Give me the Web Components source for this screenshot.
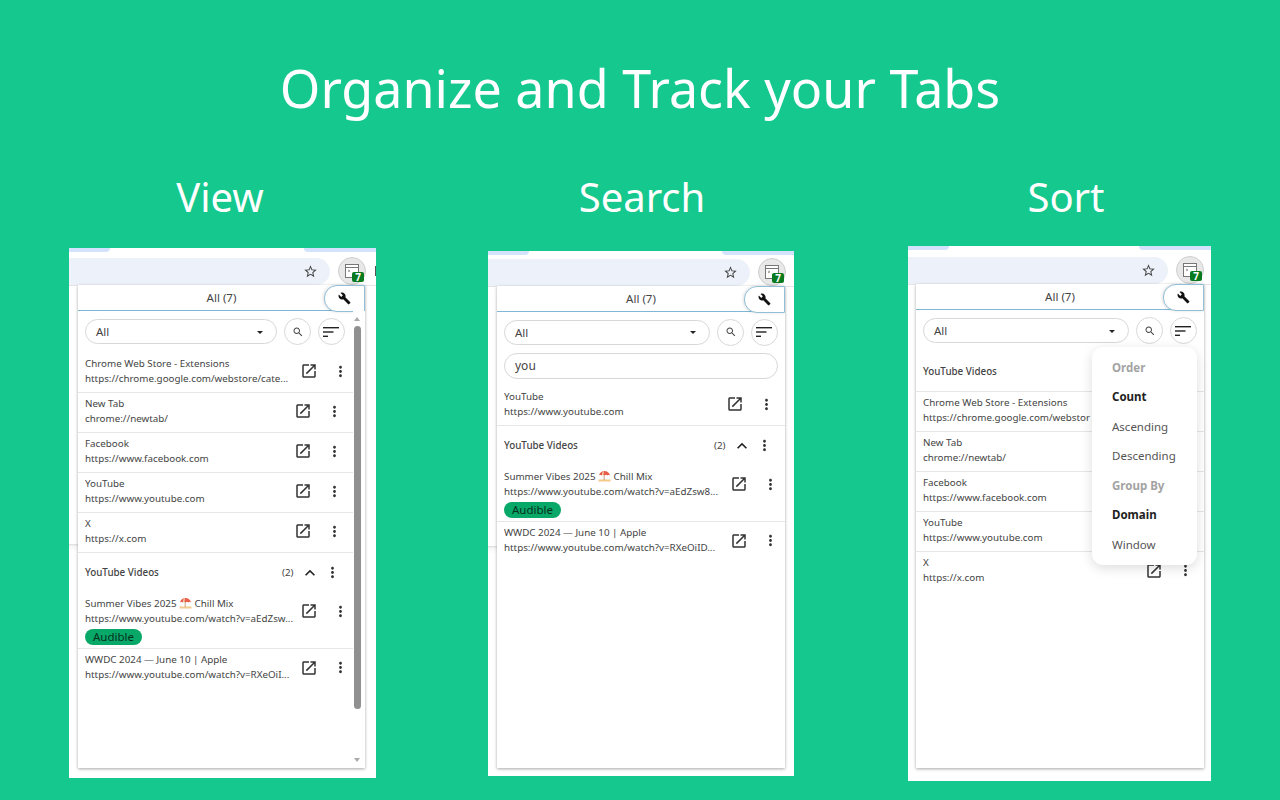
<!DOCTYPE html>
<html lang="en"><head><meta charset="utf-8"><title>Organize and Track your Tabs</title>
<style>
html,body{margin:0;padding:0;background:#15c88d}
body{font-family:"Noto Sans","Open Sans",sans-serif;color:#444}
</style></head><body>

<promo-page>
  <span slot="title">Organize and Track your Tabs</span>

  <promo-column heading="View" style="--hl:0px;--hr:5px;--gap:30px;--w:307px;--h:530px">
    <browser-shot style="--strip:9px;--addr:261px;--pl:9px;--pw:287px;--ph:483px;--line:296px">
      <tabs-popup scroll>
        <tab-row style="--end:4.5px"><span>Chrome Web Store - Extensions</span><span slot="url">https://chrome.google.com/webstore/cate...</span></tab-row>
        <tab-row><span>New Tab</span><span slot="url">chrome://newtab/</span></tab-row>
        <tab-row><span>Facebook</span><span slot="url">https://www.facebook.com</span></tab-row>
        <tab-row><span>YouTube</span><span slot="url">https://www.youtube.com</span></tab-row>
        <tab-row><span>X</span><span slot="url">https://x.com</span></tab-row>
        <tab-group open>YouTube Videos</tab-group>
        <tab-row audible style="--end:4.5px"><span>Summer Vibes 2025 <beach-emoji></beach-emoji> Chill Mix</span><span slot="url">https://www.youtube.com/watch?v=aEdZsw...</span></tab-row>
        <tab-row plain style="--end:4.5px"><span>WWDC 2024 — June 10 | Apple</span><span slot="url">https://www.youtube.com/watch?v=RXeOiI...</span></tab-row>
      </tabs-popup>
    </browser-shot>
  </promo-column>

  <promo-column heading="Search" style="--hl:2px;--hr:0px;--gap:33px;--w:306px;--h:525px;--ml:112px">
    <browser-shot style="--strip:7px;--addr:262px;--pl:9px;--pw:288px;--ph:482px;--line:295px">
      <tabs-popup query="you">
        <tab-row><span>YouTube</span><span slot="url">https://www.youtube.com</span></tab-row>
        <tab-group open>YouTube Videos</tab-group>
        <tab-row audible style="--end:6.5px"><span>Summer Vibes 2025 <beach-emoji></beach-emoji> Chill Mix</span><span slot="url">https://www.youtube.com/watch?v=aEdZsw8...</span></tab-row>
        <tab-row plain style="--end:6.5px"><span>WWDC 2024 — June 10 | Apple</span><span slot="url">https://www.youtube.com/watch?v=RXeOiID...</span></tab-row>
      </tabs-popup>
    </browser-shot>
  </promo-column>

  <promo-column heading="Sort" style="--hl:13px;--hr:0px;--gap:28px;--w:303px;--h:535px;--ml:114px">
    <browser-shot style="--strip:10px;--addr:260px;--pl:8px;--pw:288px;--ph:484px;--line:-9px">
      <tabs-popup>
        <tab-group first>YouTube Videos</tab-group>
        <tab-row><span>Chrome Web Store - Extensions</span><span slot="url">https://chrome.google.com/webstor</span></tab-row>
        <tab-row><span>New Tab</span><span slot="url">chrome://newtab/</span></tab-row>
        <tab-row><span>Facebook</span><span slot="url">https://www.facebook.com</span></tab-row>
        <tab-row><span>YouTube</span><span slot="url">https://www.youtube.com</span></tab-row>
        <tab-row plain><span>X</span><span slot="url">https://x.com</span></tab-row>
        <sort-menu slot="overlay">
          <b class="h">Order</b><b>Count</b><span>Ascending</span><span>Descending</span>
          <b class="h">Group By</b><b>Domain</b><span>Window</span>
        </sort-menu>
      </tabs-popup>
    </browser-shot>
  </promo-column>
</promo-page>

<script>
const ICONS={
 open:'M19 19H5V5h7V3H5c-1.11 0-2 .9-2 2v14c0 1.1.89 2 2 2h14c1.1 0 2-.9 2-2v-7h-2v7zM14 3v2h3.59l-9.83 9.83 1.41 1.41L19 6.41V10h2V3h-7z',
 dots:'M12 8c1.1 0 2-.9 2-2s-.9-2-2-2-2 .9-2 2 .9 2 2 2zm0 2c-1.1 0-2 .9-2 2s.9 2 2 2 2-.9 2-2-.9-2-2-2zm0 6c-1.1 0-2 .9-2 2s.9 2 2 2 2-.9 2-2-.9-2-2-2z',
 up:'M12 8l-6 6 1.41 1.41L12 10.83l4.59 4.58L18 14z',
 wrench:'M22.7 19l-9.1-9.1c.9-2.3.4-5-1.5-6.9-2-2-5-2.4-7.4-1.3L9 6 6 9 1.6 4.7C.4 7.1.9 10.1 2.9 12.1c1.9 1.9 4.6 2.4 6.9 1.5l9.1 9.1c.4.4 1 .4 1.4 0l2.3-2.3c.5-.4.5-1.1.1-1.4z',
 search:'M15.5 14h-.79l-.28-.27C15.41 12.59 16 11.11 16 9.5 16 5.91 13.09 3 9.5 3S3 5.91 3 9.5 5.91 16 9.5 16c1.61 0 3.09-.59 4.23-1.57l.27.28v.79l5 4.99L20.49 19l-4.99-5zm-6 0C7.01 14 5 11.99 5 9.5S7.01 5 9.5 5 14 7.01 14 9.5 11.99 14 9.5 14z',
 star:'M22 9.24l-7.19-.62L12 2 9.19 8.63 2 9.24l5.46 4.73L5.82 21 12 17.27 18.18 21l-1.63-7.03L22 9.24zM12 15.4l-3.76 2.27 1-4.28-3.32-2.88 4.38-.38L12 6.1l1.71 4.04 4.38.38-3.32 2.88 1 4.28L12 15.4z'
};
const icon=(n,s,c='#333')=>`<svg width="${s}" height="${s}" viewBox="0 0 24 24" fill="${c}" aria-hidden="true"><path d="${ICONS[n]}"/></svg>`;

class Base extends HTMLElement{
  constructor(){super();this.attachShadow({mode:'open'}).innerHTML=this.markup();}
  markup(){return '<slot></slot>';}
}
customElements.define('promo-page',class extends Base{markup(){return `<style>
:host{display:block;width:1280px;height:800px;overflow:hidden;background:#15c88d}
h1{margin:0;height:175px;padding-top:54px;box-sizing:border-box;font:400 52px/68px "Noto Sans",sans-serif;color:#fff;text-align:center}
.row{display:flex;align-items:flex-start;padding-left:69px}
</style><h1><slot name="title"></slot></h1><div class="row"><slot></slot></div>`}});

customElements.define('promo-column',class extends Base{
  markup(){return `<style>
:host{display:block;flex:none;width:var(--w);margin-left:var(--ml,0)}
h2{margin:0 0 var(--gap);padding:0 var(--hr) 0 var(--hl);height:43px;font:400 40px/43px "Noto Sans",sans-serif;color:#fff;text-align:center;white-space:nowrap}
</style><h2>${this.getAttribute('heading')}</h2><slot></slot>`}
});

customElements.define('browser-shot',class extends Base{markup(){return `<style>
:host{display:block;height:var(--h);overflow:hidden;position:relative;background:linear-gradient(#fff 0,#fff var(--line),#dedede var(--line),#e6e6e6 calc(var(--line) + 1px),#f7f7f7 calc(var(--line) + 2px),#fff calc(var(--line) + 8px)) left top/9px 100% no-repeat,#fff}
.strip{height:var(--strip);position:relative;overflow:hidden}
.strip i{position:absolute;top:0;height:4px;background:#d3e3fd}
.strip i:first-child{left:0;width:41px;border-radius:0 0 8px 0}
.strip i:last-child{right:0;width:72px;border-radius:0 0 0 8px}
.tool{display:flex;align-items:center;height:28px;gap:8px;border-bottom:1px solid #e4e4e4;background:#fff}
.addr{flex:none;width:var(--addr);height:27px;background:#edf2fa;border-radius:0 14px 14px 0;display:flex;align-items:center;justify-content:flex-end;padding-right:12px;box-sizing:border-box}
.ext{flex:none;width:28px;height:28px;border-radius:50%;background:#e8e8e8;border:1px solid #cfcfcf;box-sizing:border-box;position:relative;display:flex;justify-content:center;align-items:center}
.ext svg{margin:-1px 0 0 -1px}
.badge{position:absolute;left:13px;top:14px;width:12px;height:10px;background:#0a7a20;color:#fff;border-radius:2px;font:700 10px/10px "Noto Sans",sans-serif;text-align:center}
.next{flex:none;width:3px;height:10px;background:#555;margin-left:1px}
.wrap{margin:-1px 0 0 var(--pl);width:var(--pw);height:var(--ph);position:relative}
</style>
<div class="strip"><i></i><i></i></div>
<div class="tool"><div class="addr">${icon('star',15,'#444')}</div>
<div class="ext"><svg width="16" height="16" viewBox="0 0 16 16" fill="none"><rect x="1.500" y="1.500" width="13" height="13" fill="#fff" stroke="#777"/><path d="M1.500 4.500h13" stroke="#777"/><path d="M4 7l2 .8M4 8.800l2-.8" stroke="#888" stroke-width=".8"/></svg><span class="badge">7</span></div><div class="next"></div></div>
<div class="wrap"><slot></slot></div>`}});

customElements.define('tabs-popup',class extends Base{
  markup(){
    const scroll=this.hasAttribute('scroll');
    const q=this.getAttribute('query');
    return `<style>
:host{display:flex;flex-direction:column;height:100%;background:#fff;box-shadow:0 1px 3px rgba(0,0,0,.35);position:relative;font:400 9.8px/15px "Noto Sans",sans-serif;color:#444}
.head{flex:none;height:26px;box-sizing:border-box;border-bottom:1.5px solid #7fb8d4;display:flex;align-items:center;justify-content:center;font-size:11.5px;color:#444;position:relative}
.wr{position:absolute;right:0;top:0;bottom:-1.5px;width:41px;box-sizing:border-box;background:#fff;border:1px solid #8fc0d8;border-radius:13px 0 0 13px;box-shadow:-1px 0 3px rgba(0,0,0,.12);display:flex;align-items:center;justify-content:center}
.body{flex:1;display:flex;min-height:0}
.main{flex:1;min-width:0;display:flex;flex-direction:column}
.bar{display:flex;gap:7px;align-items:center;padding:${q?7.5:8}px ${scroll?8:7}px 8.5px 7px}
.sel{flex:1;height:25px;box-sizing:border-box;border:1px solid #d8d8d8;border-radius:13px;display:flex;align-items:center;justify-content:space-between;padding:0 13px 0 10px;font-size:11.5px}
.sel i{width:0;height:0;border:3px solid transparent;border-top:3.5px solid #222;border-bottom:0;margin-top:1px}
.rnd{flex:none;width:27px;height:27px;margin:-1px 0;box-sizing:border-box;border:1px solid #d8d8d8;border-radius:50%;display:flex;align-items:center;justify-content:center}
.q{margin:0 7px 6.5px;height:26px;box-sizing:border-box;border:1px solid #d8d8d8;border-radius:13px;padding:0 10px;font-size:12px;line-height:24px}
.sb{flex:none;width:12px;position:relative;background:#fff}
.sb b{position:absolute;left:1px;width:7px;top:15px;height:383px;background:#909090;border-radius:3.5px}
.sb i{position:absolute;left:1px;width:0;height:0;border:3.5px solid transparent}
.sb i.u{top:6px;border-bottom:4px solid #aaa;border-top:0}
.sb i.d{bottom:6px;border-top:4px solid #aaa;border-bottom:0}
</style>
<div class="head">All (7)<div class="wr">${icon('wrench',13,'#111')}</div></div>
<div class="body"><div class="main">
<div class="bar"><div class="sel">All<i></i></div><div class="rnd">${icon('search',12,'#444')}</div><div class="rnd"><svg width="17" height="12" viewBox="0 0 17 12" fill="#222" aria-hidden="true"><rect x="0" y="1" width="16" height="1.400"/><rect x="0" y="5.300" width="10.500" height="1.400"/><rect x="0" y="9.600" width="5" height="1.400"/></svg></div></div>
${q?`<div class="q">${q}</div>`:''}
<slot></slot></div>${scroll?'<div class="sb"><i class="u"></i><b></b><i class="d"></i></div>':''}</div>
<slot name="overlay"></slot>`}
});

customElements.define('tab-row',class extends Base{
  markup(){
    const a=this.hasAttribute('audible');
    return `<style>
:host{display:flex;align-items:flex-start;box-sizing:border-box;padding:3px var(--end,10.5px) 0 7px;height:${a?'56.5px':'40px'};${this.hasAttribute('plain')?'':'border-bottom:1px solid #e6e6e6;'}white-space:nowrap;flex:none}
.t{flex:1;min-width:0;overflow:hidden;height:100%}
.t div{height:15px;overflow:hidden}
.pill{display:block;width:max-content;margin-top:3.500px;height:16px;padding:0 8px;border-radius:8px;background:#08a868;color:#04301c;font-size:11.500px;line-height:16px}
.a{flex:none;display:flex;align-items:center;gap:13.500px;height:31px}
svg{display:block}
</style>
<div class="t"><div><slot></slot></div><div><slot name="url"></slot></div>${a?'<span class="pill">Audible</span>':''}</div>
<div class="a">${icon('open',18)}${icon('dots',17)}</div>`}
});

customElements.define('tab-group',class extends Base{
  markup(){
    const first=this.hasAttribute('first');
    return `<style>
:host{display:flex;align-items:center;flex:none;box-sizing:border-box;height:${first?40.5:40}px;padding:0 12.500px 0 7px;${first?'border-bottom:1px solid #e6e6e6;':''}}
span{flex:1;white-space:nowrap;color:#444;font-weight:500}
em{font-style:normal;color:#444;margin-right:6.500px}
.c{width:20px;margin-right:3.500px}
svg{display:block}
</style><span><slot></slot></span>${first?'':`<em>(2)</em><div class="c">${icon('up',20,'#222')}</div>${icon('dots',17)}`}`}
});

customElements.define('sort-menu',class extends Base{
  markup(){return `<style>
:host{position:absolute;left:176px;top:63px;width:105px;height:218px;box-sizing:border-box;padding:5.500px 0;background:#fff;border-radius:11px;box-shadow:0 3px 12px rgba(0,0,0,.14);display:flex;flex-direction:column}
::slotted(*){display:block;height:29.500px;line-height:29.500px;padding-left:20px;font-size:11.500px;font-weight:400;color:#555}
::slotted(b){font-weight:700;color:#222}
::slotted(b.h){color:#a3a3a3}
</style><slot></slot>`}
});

customElements.define('beach-emoji',class extends Base{
  markup(){return `<style>:host{display:inline-block;width:13px;height:12px;vertical-align:-2px}svg{display:block}</style>
<svg width="13" height="12" viewBox="0 0 13 12" role="img" aria-label="umbrella on ground"><path d="M.5 9.500h12v2H.5z" fill="#f5c98a"/><path d="M6.200 3v7" stroke="#b98a5a" stroke-width=".8"/><path d="M1 5.500C1.600 2.600 3.800 1 6.500 1s4.900 1.600 5.500 4.500c-1-.6-1.900-.6-2.800 0-.8-.6-1.800-.6-2.700 0-.9-.6-1.900-.6-2.700 0-.9-.6-1.800-.6-2.800 0z" fill="#e8604c"/><path d="M5 1.400c-.6 1-.9 2.500-.8 4l1.200-.2c0-1.300.1-2.800.6-4z" fill="#f6e3c0"/></svg>`}
});
</script>
</body></html>
